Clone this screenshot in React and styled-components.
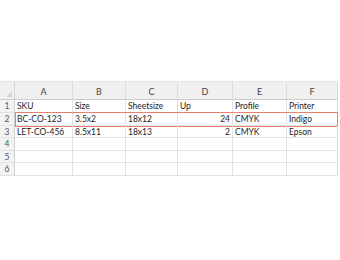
import React from "react";
import styled, { createGlobalStyle } from "styled-components";

const Global = createGlobalStyle`
  html, body { margin: 0; padding: 0; background: #ffffff; }
  body { font-family: Lato, "Open Sans", "Liberation Sans", sans-serif; }
  * { box-sizing: border-box; }
`;

const COLS = "15px 58px 53px 52px 55px 54px 51px";

const Page = styled.div`
  padding-top: 81px;
  width: 340px;
  height: 260px;
`;

const Sheet = styled.div`
  display: flex;
  flex-direction: column;
  width: 338px;
`;

const HeaderRow = styled.div`
  display: grid;
  grid-template-columns: ${COLS};
  height: 19px;
  background: #f0f0f0;
  border-top: 1px solid #e2e2e2;
  border-bottom: 1px solid #cdcdcd;
`;

const Corner = styled.div`
  position: relative;
  border-right: 1px solid #d4d4d4;
  &::after {
    content: "";
    position: absolute;
    right: 2px;
    bottom: 2px;
    width: 0;
    height: 0;
    border-left: 6px solid transparent;
    border-bottom: 6px solid #d6d6d6;
  }
`;

const ColHead = styled.div`
  display: flex;
  align-items: flex-end;
  justify-content: center;
  padding-bottom: 2px;
  font-size: 9px;
  color: #444;
  border-right: 1px solid #dcdcdc;
`;

const Row = styled.div`
  position: relative;
  display: grid;
  grid-template-columns: ${COLS};
  height: ${(p) => p.$h}px;
  ${(p) =>
    p.$selected &&
    `
    &::after {
      content: "";
      position: absolute;
      left: 15px;
      right: 0;
      top: -1px;
      bottom: -1px;
      border: 1.5px solid #e8806e;
      pointer-events: none;
    }
  `}
`;

const RowNum = styled.div`
  display: flex;
  align-items: center;
  justify-content: center;
  font-size: 8.5px;
  color: #555;
  background: #f3f3f3;
  border-right: 1px solid #d0d0d0;
  border-bottom: 1px solid #e2e2e2;
`;

const Cell = styled.div`
  display: flex;
  align-items: center;
  justify-content: ${(p) => (p.$num ? "flex-end" : "flex-start")};
  padding: 0 2px 0 2px;
  font-size: 8.5px;
  color: #1e1e1e;
  white-space: nowrap;
  overflow: hidden;
  border-right: 1px solid #e2e2e2;
  border-bottom: 1px solid #e2e2e2;
`;

const letters = ["A", "B", "C", "D", "E", "F"];
const data = [
  ["SKU", "Size", "Sheetsize", "Up", "Profile", "Printer"],
  ["BC-CO-123", "3.5x2", "18x12", 24, "CMYK", "Indigo"],
  ["LET-CO-456", "8.5x11", "18x13", 2, "CMYK", "Epson"],
  ["", "", "", "", "", ""],
  ["", "", "", "", "", ""],
  ["", "", "", "", "", ""],
];
const heights = [13, 13, 12, 13, 12, 13];

export default function App() {
  return (
    <Page>
      <Global />
      <Sheet>
        <HeaderRow>
          <Corner />
          {letters.map((l) => (
            <ColHead key={l}>{l}</ColHead>
          ))}
        </HeaderRow>
        {data.map((row, i) => (
          <Row key={i} $h={heights[i]} $selected={i === 1}>
            <RowNum>{i + 1}</RowNum>
            {row.map((v, j) => (
              <Cell key={j} $num={typeof v === "number"}>
                {v}
              </Cell>
            ))}
          </Row>
        ))}
      </Sheet>
    </Page>
  );
}
